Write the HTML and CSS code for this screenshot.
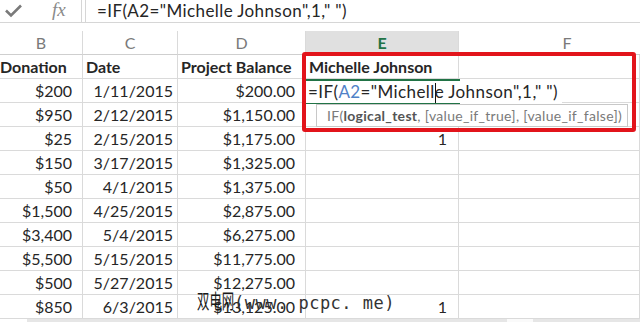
FILE: index.html
```html
<!DOCTYPE html>
<html lang="en">
<head>
  <meta charset="UTF-8" />
  <title>IF formula</title>
  <link rel="stylesheet" href="styles.css">
</head>
<body>
  <!-- Formula bar -->
  <div class="formula-bar">
    <div class="bar-icons">
      <svg class="check" width="24" height="22" viewBox="0 0 24 22">
        <polyline points="6,10.5 11,15.5 21,5.5" fill="none" stroke="#7a7a7a" stroke-width="2.6" />
      </svg>
      <span class="fx">fx</span>
    </div>
    <div class="formula-input">=IF(A2="Michelle Johnson",1," ")</div>
  </div>

  <!-- Grid -->
  <div class="sheet">
    <div class="col-head">B</div>
    <div class="col-head">C</div>
    <div class="col-head">D</div>
    <div class="col-head active">E</div>
    <div class="col-head last">F</div>

    <div class="cell bold first">Donation</div>
    <div class="cell bold">Date</div>
    <div class="cell bold">Project Balance</div>
    <div class="cell bold">Michelle Johnson</div>
    <div class="cell"></div>
  </div>
  <div class="sheet" id="rows"></div>
  <div class="hscroll"><div class="thumb"></div></div>

  <!-- Editing overlays -->
  <div class="editor"><span class="edit-text">=IF(<span class="ref">A2</span>="Michell<span class="caret"></span>e Johnson",1," ")</span></div>
  <div class="tip">IF(<b>logical_test</b>, [value_if_true], [value_if_false])</div>
  <div class="highlight"></div>
  <div class="watermark"><span class="cjk">双电网</span><span class="latin">(www. pcpc. me)</span></div>

  <script>
    const rows = [
      ["$200", "1/11/2015", "$200.00", ""],
      ["$950", "2/12/2015", "$1,150.00", ""],
      ["$25", "2/15/2015", "$1,175.00", "1"],
      ["$150", "3/17/2015", "$1,325.00", ""],
      ["$50", "4/1/2015", "$1,375.00", ""],
      ["$1,500", "4/25/2015", "$2,875.00", ""],
      ["$3,400", "5/4/2015", "$6,275.00", ""],
      ["$5,500", "5/15/2015", "$11,775.00", ""],
      ["$500", "5/27/2015", "$12,275.00", ""],
      ["$850", "6/3/2015", "$13,125.00", "1"]
    ];

    const grid = document.getElementById('rows');
    rows.forEach(row => {
      row.forEach((value, i) => {
        const cell = document.createElement('div');
        cell.className = 'cell num c' + i;
        cell.textContent = value;
        grid.appendChild(cell);
      });
      grid.appendChild(document.createElement('div')).className = 'cell';
    });
  </script>
</body>
</html>
```

FILE: styles.css
```css
body {
  margin: 0;
  position: relative;
  width: 640px;
  height: 322px;
  overflow: hidden;
  background: #fff;
  font-family: Lato, "Open Sans", sans-serif;
  color: #262626;
}

/* formula bar */
.formula-bar {
  display: flex;
  height: 22px;
  border-bottom: 1px solid #d6d6d6;
  margin-bottom: 8px;
}

.bar-icons {
  width: 81px;
  display: flex;
  align-items: center;
  border-right: 1px solid #d6d6d6;
}

.fx {
  font-family: "Liberation Serif", serif;
  font-style: italic;
  font-size: 19px;
  color: #8a8a8a;
  margin-left: 28px;
  margin-top: -2px;
}

.formula-input {
  flex: 1;
  margin-left: 3px;
  border-left: 1px solid #d6d6d6;
  padding-left: 11px;
  font-size: 17px;
  letter-spacing: 0.4px;
  line-height: 21px;
  white-space: nowrap;
  overflow: hidden;
}

/* grid */
.sheet {
  display: grid;
  grid-template-columns: 83px 95px 128px 153px 181px;
  width: 640px;
  overflow: hidden;
}

.col-head,
.cell {
  box-sizing: border-box;
  height: 24px;
  border-right: 1px solid #dadada;
  border-bottom: 1px solid #dadada;
  white-space: nowrap;
  overflow: hidden;
  font-size: 16px;
  line-height: 23px;
}

.col-head {
  text-align: center;
  color: #7a7a7a;
  border-bottom-color: #cfcfcf;
}

.col-head.active {
  background: #e0e0e0;
  color: #217346;
  font-weight: 700;
}

.col-head.last {
  padding-left: 35px;
  border-right: none;
}

.cell {
  padding: 0 4px 0 3px;
}

.cell.first {
  padding-left: 0;
}

.bold {
  font-weight: 700;
}

.num {
  text-align: right;
}

.c0,
.c2 {
  padding-right: 10px;
}

.c3 {
  padding-right: 11px;
}

.hscroll {
  height: 3px;
  margin-left: 27px;
  background: #e6e6e6;
  position: relative;
}

.thumb {
  position: absolute;
  left: 480px;
  width: 26px;
  height: 3px;
  background: #fafafa;
}

/* edit mode overlays */
.editor {
  position: absolute;
  left: 306px;
  top: 79px;
  width: 154px;
  height: 21px;
  border-top: 2px solid #217346;
  border-bottom: 2px solid #217346;
  background: #fff;
  font-size: 17px;
  letter-spacing: 0.4px;
  line-height: 21px;
}

.edit-text {
  display: inline-block;
  background: #fff;
  padding: 0 4px 0 2px;
  white-space: nowrap;
}

.ref {
  color: #4f81c7;
}

.caret {
  display: inline-block;
  width: 1px;
  height: 20px;
  margin-right: -1px;
  background: #111;
  vertical-align: -5px;
}

.tip {
  position: absolute;
  left: 316px;
  top: 104px;
  width: 300px;
  height: 21px;
  border: 1px solid #c8c8c8;
  background: #fff;
  padding-left: 10px;
  font-size: 14px;
  letter-spacing: 0.3px;
  line-height: 21px;
  color: #7a7a7a;
  white-space: nowrap;
  overflow: hidden;
}

.tip b {
  color: #555;
}

.highlight {
  position: absolute;
  left: 302px;
  top: 52px;
  width: 326px;
  height: 72px;
  border: 4px solid #e2141b;
  border-radius: 3px;
}

.watermark {
  position: absolute;
  left: 197px;
  top: 286px;
  white-space: nowrap;
  color: #1a1a1a;
}

.cjk {
  display: inline-block;
  font-family: "Noto Sans CJK SC", sans-serif;
  font-size: 20px;
  transform: scaleX(0.62);
  transform-origin: left;
  width: 37px;
}

.latin {
  font-family: "DejaVu Sans Mono", monospace;
  font-size: 17px;
  color: #333;
  letter-spacing: 0.5px;
}
```
